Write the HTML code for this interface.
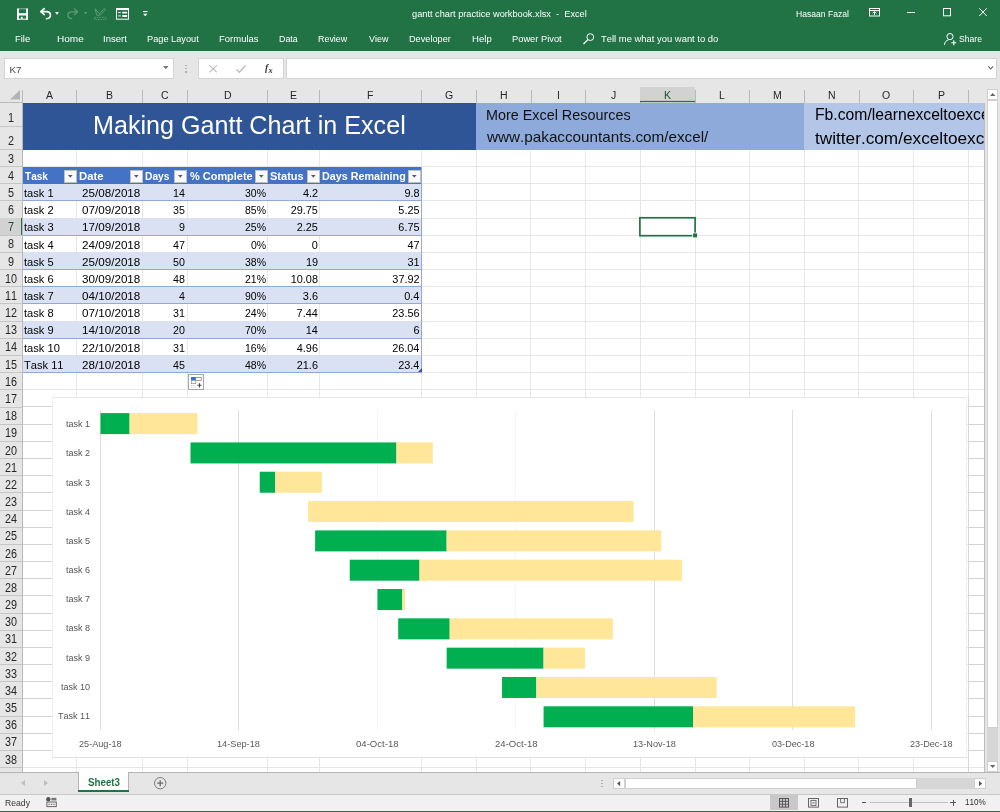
<!DOCTYPE html>
<html lang="en"><head><meta charset="utf-8"><title>gantt chart practice workbook.xlsx - Excel</title>
<style>
*{box-sizing:border-box;margin:0;padding:0}
html,body{width:1000px;height:812px;overflow:hidden;background:#fff}
body{font-family:"Liberation Sans",sans-serif;position:relative;color:#000;font-kerning:none}
.a{position:absolute}
.t{position:absolute;white-space:nowrap;transform-origin:0 0}
svg{overflow:visible}
#w{position:absolute;left:0;top:0;width:1000px;height:812px;will-change:transform}
</style></head><body><div id="w">

<div class="a" style="left:0.00px;top:0.00px;width:1000.00px;height:51.00px;background:#217346;"></div>
<svg class="a" style="left:17px;top:8px;" width="11" height="12" viewBox="0 0 11 12"><rect x="0" y="0.6" width="1.9" height="11" fill="#fff"/><rect x="9.1" y="0.6" width="1.9" height="11" fill="#fff"/><rect x="0" y="0.4" width="11" height="0.9" fill="#fff" opacity="0.55"/><rect x="0" y="5.2" width="11" height="2.3" fill="#fff"/><rect x="0" y="10.6" width="11" height="1.1" fill="#fff"/><rect x="3.9" y="8.8" width="1.7" height="2" fill="#fff"/></svg>
<svg class="a" style="left:40px;top:8px;" width="11" height="12" viewBox="0 0 11 12"><path d="M0.9 3.6h5.6c2.4 0 3.9 1.5 3.9 3.4c0 2-1.5 3.6-4 3.7" fill="none" stroke="#fff" stroke-width="1.55" stroke-linecap="round"/><path d="M4.2 0.6L0.9 3.6L4.2 6.6" fill="none" stroke="#fff" stroke-width="1.55" stroke-linecap="round" stroke-linejoin="round"/></svg>
<svg class="a" style="left:55.4px;top:12.2px;" width="4" height="2.8" viewBox="0 0 4 2.8"><path d="M0 0h4l-2 2.8z" fill="#fff"/></svg>
<svg class="a" style="left:67px;top:8px;" width="11.5" height="12" viewBox="0 0 11.5 12"><path d="M10.4 3.8h-5.8c-2.3 0-3.7 1.5-3.7 3.3c0 2 1.5 3.4 3.9 3.5" fill="none" stroke="#5f9c7b" stroke-width="1.2" stroke-linecap="round"/><path d="M7.4 0.8L10.6 3.8L7.4 6.8" fill="none" stroke="#5f9c7b" stroke-width="1.2" stroke-linecap="round" stroke-linejoin="round"/></svg>
<svg class="a" style="left:84px;top:12.4px;" width="3.4" height="2.2" viewBox="0 0 3.4 2.2"><path d="M0 0h3.4l-1.7 2.2z" fill="#5f9c7b"/></svg>
<svg class="a" style="left:94px;top:8px;" width="12.5" height="12" viewBox="0 0 12.5 12"><path d="M1.2 0.8l1.6 6.6l3.6-0.4M1.2 0.8l5.2 6.2M6.6 6.8l5-5.4l-1.2-1l-5 5.2" fill="none" stroke="#5f9c7b" stroke-width="1"/><path d="M0.5 9.4h11.5v2.2h-11.5z" fill="none" stroke="#5f9c7b" stroke-width="0.9" stroke-dasharray="1.6 0.9"/></svg>
<svg class="a" style="left:116px;top:8.3px;" width="13" height="11.7" viewBox="0 0 13 11.7"><rect x="0.5" y="0.5" width="12" height="10.7" fill="none" stroke="#fff" stroke-width="1"/><rect x="0" y="0" width="13" height="2.1" fill="#fff"/><path d="M2.2 4.6h2.6M2.2 7.9h2.6" stroke="#fff" stroke-width="1"/><rect x="6.2" y="3.7" width="5" height="1.9" rx="0.4" fill="#fff"/><rect x="6.2" y="7" width="5" height="1.9" rx="0.4" fill="#fff"/></svg>
<svg class="a" style="left:142.8px;top:11.2px;" width="4.5" height="5.4" viewBox="0 0 4.5 5.4"><path d="M0 0.6h4.5" stroke="#fff" stroke-width="1.1"/><path d="M0 2.8h4.5l-2.25 2.5z" fill="#fff"/></svg>
<div class="t" style="left:412.01px;top:8px;font-size:9.7px;line-height:11px;color:#fff;transform:scaleX(0.9520);white-space:pre;">gantt chart practice workbook.xlsx  -  Excel</div>
<div class="t" style="left:796.49px;top:8px;font-size:9.7px;line-height:11px;color:#fff;transform:scaleX(0.8869);">Hasaan Fazal</div>
<svg class="a" style="left:869px;top:8px;" width="11" height="8.5" viewBox="0 0 11 8.5"><rect x="0.5" y="0.5" width="10" height="7.5" fill="none" stroke="#fff" stroke-width="1"/><path d="M0.5 2.6h10" stroke="#fff" stroke-width="1"/><path d="M5.5 3.6v3.6M3.6 5.3L5.5 3.6L7.4 5.3" fill="none" stroke="#fff" stroke-width="0.9"/></svg>
<div class="a" style="left:907.00px;top:12.20px;width:8.00px;height:1.00px;background:#fff;"></div>
<svg class="a" style="left:943px;top:8.3px;" width="8" height="8.3" viewBox="0 0 8 8.3"><rect x="0.5" y="0.5" width="7" height="7.3" fill="none" stroke="#fff" stroke-width="1"/></svg>
<svg class="a" style="left:979px;top:8.3px;" width="8" height="8.3" viewBox="0 0 8 8.3"><path d="M0.3 0.3L7.7 8M7.7 0.3L0.3 8" stroke="#fff" stroke-width="1"/></svg>
<div class="t" style="left:15.23px;top:33px;font-size:9.9px;line-height:11px;color:#fff;transform:scaleX(0.9524);">File</div>
<div class="t" style="left:56.68px;top:33px;font-size:9.9px;line-height:11px;color:#fff;transform:scaleX(1.0137);">Home</div>
<div class="t" style="left:103.12px;top:33px;font-size:9.9px;line-height:11px;color:#fff;transform:scaleX(0.9675);">Insert</div>
<div class="t" style="left:146.74px;top:33px;font-size:9.9px;line-height:11px;color:#fff;transform:scaleX(0.9322);">Page Layout</div>
<div class="t" style="left:218.62px;top:33px;font-size:9.9px;line-height:11px;color:#fff;transform:scaleX(0.9629);">Formulas</div>
<div class="t" style="left:278.67px;top:33px;font-size:9.9px;line-height:11px;color:#fff;transform:scaleX(0.8955);">Data</div>
<div class="t" style="left:318.27px;top:33px;font-size:9.9px;line-height:11px;color:#fff;transform:scaleX(0.9030);">Review</div>
<div class="t" style="left:368.56px;top:33px;font-size:9.9px;line-height:11px;color:#fff;transform:scaleX(0.9049);">View</div>
<div class="t" style="left:408.85px;top:33px;font-size:9.9px;line-height:11px;color:#fff;transform:scaleX(0.9287);">Developer</div>
<div class="t" style="left:471.61px;top:33px;font-size:9.9px;line-height:11px;color:#fff;transform:scaleX(0.9721);">Help</div>
<div class="t" style="left:511.83px;top:33px;font-size:9.9px;line-height:11px;color:#fff;transform:scaleX(0.9435);">Power Pivot</div>
<div class="t" style="left:600.79px;top:33px;font-size:9.9px;line-height:11px;color:#fff;transform:scaleX(0.9541);">Tell me what you want to do</div>
<div class="t" style="left:959.31px;top:33px;font-size:9.9px;line-height:11px;color:#fff;transform:scaleX(0.8735);">Share</div>
<svg class="a" style="left:583px;top:33px;" width="11.5" height="11.5" viewBox="0 0 11.5 11.5"><circle cx="7.3" cy="4.1" r="3.4" fill="none" stroke="#fff" stroke-width="1"/><path d="M4.9 6.6L0.5 11" stroke="#fff" stroke-width="1.2"/></svg>
<svg class="a" style="left:944px;top:33px;" width="13" height="12" viewBox="0 0 13 12"><circle cx="6" cy="3.6" r="3.1" fill="none" stroke="#fff" stroke-width="1"/><path d="M0.5 11.8c0.3-3 2-4.6 4-4.9" fill="none" stroke="#fff" stroke-width="1"/><path d="M7.3 9.7h5M9.8 7.2v5" stroke="#fff" stroke-width="1.1"/></svg>
<div class="a" style="left:0.00px;top:51.00px;width:1000.00px;height:37.50px;background:#e6e6e6;"></div>
<div class="a" style="left:3.50px;top:58.00px;width:170.00px;height:20.60px;background:#fff;border:1px solid #d4d4d4"></div>
<div class="t" style="left:9.40px;top:64px;font-size:9.8px;line-height:11px;color:#444;">K7</div>
<svg class="a" style="left:163.2px;top:66.2px;" width="5.6" height="3.2" viewBox="0 0 5.6 3.2"><path d="M0 0h5.6l-2.8 3.2z" fill="#777"/></svg>
<div class="a" style="left:185.20px;top:64.60px;width:1.40px;height:1.40px;background:#b0b0b0;"></div>
<div class="a" style="left:185.20px;top:67.90px;width:1.40px;height:1.40px;background:#b0b0b0;"></div>
<div class="a" style="left:185.20px;top:71.20px;width:1.40px;height:1.40px;background:#b0b0b0;"></div>
<div class="a" style="left:198.00px;top:58.00px;width:85.50px;height:20.60px;background:#fff;border:1px solid #d4d4d4"></div>
<svg class="a" style="left:208.5px;top:65px;" width="8.3" height="7.8" viewBox="0 0 8.3 7.8"><path d="M0.4 0.4L7.9 7.4M7.9 0.4L0.4 7.4" stroke="#bdbdbd" stroke-width="1.2"/></svg>
<svg class="a" style="left:236px;top:65px;" width="10" height="8" viewBox="0 0 10 8"><path d="M0.5 4.6L3.4 7.3L9.5 0.5" fill="none" stroke="#bdbdbd" stroke-width="1.4"/></svg>
<div class="t" style="left:264.9px;top:62px;font-size:9.8px;line-height:12px;color:#3a3a3a;font-family:'Liberation Serif',serif;font-style:italic;font-weight:bold">f<span style="font-size:8.4px;position:relative;top:1.6px;margin-left:0.4px">x</span></div>
<div class="a" style="left:286.00px;top:58.00px;width:710.50px;height:20.60px;background:#fff;border:1px solid #d4d4d4"></div>
<svg class="a" style="left:987.8px;top:66.3px;" width="5.4" height="3.6" viewBox="0 0 5.4 3.6"><path d="M0.3 0.4L2.7 3L5.1 0.4" fill="none" stroke="#666" stroke-width="1.1"/></svg>
<div class="a" style="left:0.00px;top:88.50px;width:1000.00px;height:14.00px;background:#e6e6e6;"></div>
<div class="t" style="left:46.29px;top:88px;font-size:11.7px;line-height:13px;color:#262626;transform:scaleX(0.9000);">A</div>
<div class="a" style="left:76.00px;top:90.00px;width:1.00px;height:12.50px;background:#b9b9b9;"></div>
<div class="t" style="left:106.13px;top:88px;font-size:11.7px;line-height:13px;color:#262626;transform:scaleX(0.9000);">B</div>
<div class="a" style="left:142.00px;top:90.00px;width:1.00px;height:12.50px;background:#b9b9b9;"></div>
<div class="t" style="left:161.18px;top:88px;font-size:11.7px;line-height:13px;color:#262626;transform:scaleX(0.9000);">C</div>
<div class="a" style="left:186.50px;top:90.00px;width:1.00px;height:12.50px;background:#b9b9b9;"></div>
<div class="t" style="left:223.57px;top:88px;font-size:11.7px;line-height:13px;color:#262626;transform:scaleX(0.9000);">D</div>
<div class="a" style="left:267.00px;top:90.00px;width:1.00px;height:12.50px;background:#b9b9b9;"></div>
<div class="t" style="left:290.08px;top:88px;font-size:11.7px;line-height:13px;color:#262626;transform:scaleX(0.9000);">E</div>
<div class="a" style="left:319.00px;top:90.00px;width:1.00px;height:12.50px;background:#b9b9b9;"></div>
<div class="t" style="left:367.11px;top:88px;font-size:11.7px;line-height:13px;color:#262626;transform:scaleX(0.9000);">F</div>
<div class="a" style="left:420.50px;top:90.00px;width:1.00px;height:12.50px;background:#b9b9b9;"></div>
<div class="t" style="left:445.08px;top:88px;font-size:11.7px;line-height:13px;color:#262626;transform:scaleX(0.9000);">G</div>
<div class="a" style="left:476.00px;top:90.00px;width:1.00px;height:12.50px;background:#b9b9b9;"></div>
<div class="t" style="left:500.25px;top:88px;font-size:11.7px;line-height:13px;color:#262626;transform:scaleX(0.9000);">H</div>
<div class="a" style="left:530.50px;top:90.00px;width:1.00px;height:12.50px;background:#b9b9b9;"></div>
<div class="t" style="left:557.09px;top:88px;font-size:11.7px;line-height:13px;color:#262626;transform:scaleX(0.9000);">I</div>
<div class="a" style="left:585.00px;top:90.00px;width:1.00px;height:12.50px;background:#b9b9b9;"></div>
<div class="t" style="left:610.73px;top:88px;font-size:11.7px;line-height:13px;color:#262626;transform:scaleX(0.9000);">J</div>
<div class="a" style="left:639.50px;top:90.00px;width:1.00px;height:12.50px;background:#b9b9b9;"></div>
<div class="a" style="left:640.00px;top:87.00px;width:55.00px;height:15.00px;background:#d2d2d2;"></div>
<svg class="a" style="left:0;top:0" width="1000" height="812" viewBox="0 0 1000 812"><rect x="640" y="100.9" width="55" height="1.3" fill="#217346"/></svg>
<div class="t" style="left:663.92px;top:88px;font-size:11.7px;line-height:13px;color:#1e4d34;transform:scaleX(0.9000);">K</div>
<div class="a" style="left:694.50px;top:90.00px;width:1.00px;height:12.50px;background:#b9b9b9;"></div>
<div class="t" style="left:719.36px;top:88px;font-size:11.7px;line-height:13px;color:#262626;transform:scaleX(0.9000);">L</div>
<div class="a" style="left:749.00px;top:90.00px;width:1.00px;height:12.50px;background:#b9b9b9;"></div>
<div class="t" style="left:772.91px;top:88px;font-size:11.7px;line-height:13px;color:#262626;transform:scaleX(0.9000);">M</div>
<div class="a" style="left:804.00px;top:90.00px;width:1.00px;height:12.50px;background:#b9b9b9;"></div>
<div class="t" style="left:828.25px;top:88px;font-size:11.7px;line-height:13px;color:#262626;transform:scaleX(0.9000);">N</div>
<div class="a" style="left:858.50px;top:90.00px;width:1.00px;height:12.50px;background:#b9b9b9;"></div>
<div class="t" style="left:882.46px;top:88px;font-size:11.7px;line-height:13px;color:#262626;transform:scaleX(0.9000);">O</div>
<div class="a" style="left:913.00px;top:90.00px;width:1.00px;height:12.50px;background:#b9b9b9;"></div>
<div class="t" style="left:937.63px;top:88px;font-size:11.7px;line-height:13px;color:#262626;transform:scaleX(0.9000);">P</div>
<div class="a" style="left:968.00px;top:90.00px;width:1.00px;height:12.50px;background:#b9b9b9;"></div>
<div class="a" style="left:22.00px;top:90.00px;width:1.00px;height:12.50px;background:#b9b9b9;"></div>
<svg class="a" style="left:9.8px;top:90.3px;" width="10" height="9.6" viewBox="0 0 10 9.6"><path d="M10 0v9.6h-10z" fill="#b4b4b4"/></svg>
<div class="a" style="left:0.00px;top:102.50px;width:22.50px;height:669.50px;background:#e6e6e6;"></div>
<div class="t" style="left:7.95px;top:111px;font-size:12.0px;line-height:14px;color:#262626;transform:scaleX(0.9000);">1</div>
<div class="a" style="left:0.00px;top:125.70px;width:22.00px;height:1.00px;background:#c6c6c6;"></div>
<div class="t" style="left:8.10px;top:134px;font-size:12.0px;line-height:14px;color:#262626;transform:scaleX(0.9000);">2</div>
<div class="a" style="left:0.00px;top:148.95px;width:22.00px;height:1.00px;background:#c6c6c6;"></div>
<div class="t" style="left:8.13px;top:152px;font-size:12.0px;line-height:14px;color:#262626;transform:scaleX(0.9000);">3</div>
<div class="a" style="left:0.00px;top:166.12px;width:22.00px;height:1.00px;background:#c6c6c6;"></div>
<div class="t" style="left:8.13px;top:169px;font-size:12.0px;line-height:14px;color:#262626;transform:scaleX(0.9000);">4</div>
<div class="a" style="left:0.00px;top:183.29px;width:22.00px;height:1.00px;background:#c6c6c6;"></div>
<div class="t" style="left:8.11px;top:186px;font-size:12.0px;line-height:14px;color:#262626;transform:scaleX(0.9000);">5</div>
<div class="a" style="left:0.00px;top:200.46px;width:22.00px;height:1.00px;background:#c6c6c6;"></div>
<div class="t" style="left:8.06px;top:203px;font-size:12.0px;line-height:14px;color:#262626;transform:scaleX(0.9000);">6</div>
<div class="a" style="left:0.00px;top:217.63px;width:22.00px;height:1.00px;background:#c6c6c6;"></div>
<div class="a" style="left:0.00px;top:218.13px;width:22.50px;height:17.17px;background:#d2d2d2;"></div>
<div class="a" style="left:21.00px;top:218.13px;width:2.00px;height:17.17px;background:#217346;"></div>
<div class="t" style="left:8.09px;top:220px;font-size:12.0px;line-height:14px;color:#1e4d34;transform:scaleX(0.9000);">7</div>
<div class="a" style="left:0.00px;top:234.80px;width:22.00px;height:1.00px;background:#c6c6c6;"></div>
<div class="t" style="left:8.10px;top:237px;font-size:12.0px;line-height:14px;color:#262626;transform:scaleX(0.9000);">8</div>
<div class="a" style="left:0.00px;top:251.97px;width:22.00px;height:1.00px;background:#c6c6c6;"></div>
<div class="t" style="left:8.10px;top:255px;font-size:12.0px;line-height:14px;color:#262626;transform:scaleX(0.9000);">9</div>
<div class="a" style="left:0.00px;top:269.14px;width:22.00px;height:1.00px;background:#c6c6c6;"></div>
<div class="t" style="left:4.89px;top:272px;font-size:12.0px;line-height:14px;color:#262626;transform:scaleX(0.9000);">10</div>
<div class="a" style="left:0.00px;top:286.31px;width:22.00px;height:1.00px;background:#c6c6c6;"></div>
<div class="t" style="left:4.95px;top:289px;font-size:12.0px;line-height:14px;color:#262626;transform:scaleX(0.9000);">11</div>
<div class="a" style="left:0.00px;top:303.48px;width:22.00px;height:1.00px;background:#c6c6c6;"></div>
<div class="t" style="left:4.95px;top:306px;font-size:12.0px;line-height:14px;color:#262626;transform:scaleX(0.9000);">12</div>
<div class="a" style="left:0.00px;top:320.65px;width:22.00px;height:1.00px;background:#c6c6c6;"></div>
<div class="t" style="left:4.92px;top:323px;font-size:12.0px;line-height:14px;color:#262626;transform:scaleX(0.9000);">13</div>
<div class="a" style="left:0.00px;top:337.82px;width:22.00px;height:1.00px;background:#c6c6c6;"></div>
<div class="t" style="left:4.84px;top:340px;font-size:12.0px;line-height:14px;color:#262626;transform:scaleX(0.9000);">14</div>
<div class="a" style="left:0.00px;top:354.99px;width:22.00px;height:1.00px;background:#c6c6c6;"></div>
<div class="t" style="left:4.91px;top:358px;font-size:12.0px;line-height:14px;color:#262626;transform:scaleX(0.9000);">15</div>
<div class="a" style="left:0.00px;top:372.16px;width:22.00px;height:1.00px;background:#c6c6c6;"></div>
<div class="t" style="left:4.92px;top:375px;font-size:12.0px;line-height:14px;color:#262626;transform:scaleX(0.9000);">16</div>
<div class="a" style="left:0.00px;top:389.33px;width:22.00px;height:1.00px;background:#c6c6c6;"></div>
<div class="t" style="left:4.95px;top:392px;font-size:12.0px;line-height:14px;color:#262626;transform:scaleX(0.9000);">17</div>
<div class="a" style="left:0.00px;top:406.50px;width:22.00px;height:1.00px;background:#c6c6c6;"></div>
<div class="t" style="left:4.92px;top:409px;font-size:12.0px;line-height:14px;color:#262626;transform:scaleX(0.9000);">18</div>
<div class="a" style="left:0.00px;top:423.67px;width:22.00px;height:1.00px;background:#c6c6c6;"></div>
<div class="t" style="left:4.94px;top:426px;font-size:12.0px;line-height:14px;color:#262626;transform:scaleX(0.9000);">19</div>
<div class="a" style="left:0.00px;top:440.84px;width:22.00px;height:1.00px;background:#c6c6c6;"></div>
<div class="t" style="left:5.03px;top:444px;font-size:12.0px;line-height:14px;color:#262626;transform:scaleX(0.9000);">20</div>
<div class="a" style="left:0.00px;top:458.01px;width:22.00px;height:1.00px;background:#c6c6c6;"></div>
<div class="t" style="left:5.09px;top:461px;font-size:12.0px;line-height:14px;color:#262626;transform:scaleX(0.9000);">21</div>
<div class="a" style="left:0.00px;top:475.18px;width:22.00px;height:1.00px;background:#c6c6c6;"></div>
<div class="t" style="left:5.09px;top:478px;font-size:12.0px;line-height:14px;color:#262626;transform:scaleX(0.9000);">22</div>
<div class="a" style="left:0.00px;top:492.35px;width:22.00px;height:1.00px;background:#c6c6c6;"></div>
<div class="t" style="left:5.06px;top:495px;font-size:12.0px;line-height:14px;color:#262626;transform:scaleX(0.9000);">23</div>
<div class="a" style="left:0.00px;top:509.52px;width:22.00px;height:1.00px;background:#c6c6c6;"></div>
<div class="t" style="left:4.98px;top:512px;font-size:12.0px;line-height:14px;color:#262626;transform:scaleX(0.9000);">24</div>
<div class="a" style="left:0.00px;top:526.69px;width:22.00px;height:1.00px;background:#c6c6c6;"></div>
<div class="t" style="left:5.05px;top:529px;font-size:12.0px;line-height:14px;color:#262626;transform:scaleX(0.9000);">25</div>
<div class="a" style="left:0.00px;top:543.86px;width:22.00px;height:1.00px;background:#c6c6c6;"></div>
<div class="t" style="left:5.06px;top:547px;font-size:12.0px;line-height:14px;color:#262626;transform:scaleX(0.9000);">26</div>
<div class="a" style="left:0.00px;top:561.03px;width:22.00px;height:1.00px;background:#c6c6c6;"></div>
<div class="t" style="left:5.09px;top:564px;font-size:12.0px;line-height:14px;color:#262626;transform:scaleX(0.9000);">27</div>
<div class="a" style="left:0.00px;top:578.20px;width:22.00px;height:1.00px;background:#c6c6c6;"></div>
<div class="t" style="left:5.06px;top:581px;font-size:12.0px;line-height:14px;color:#262626;transform:scaleX(0.9000);">28</div>
<div class="a" style="left:0.00px;top:595.37px;width:22.00px;height:1.00px;background:#c6c6c6;"></div>
<div class="t" style="left:5.08px;top:598px;font-size:12.0px;line-height:14px;color:#262626;transform:scaleX(0.9000);">29</div>
<div class="a" style="left:0.00px;top:612.54px;width:22.00px;height:1.00px;background:#c6c6c6;"></div>
<div class="t" style="left:5.10px;top:615px;font-size:12.0px;line-height:14px;color:#262626;transform:scaleX(0.9000);">30</div>
<div class="a" style="left:0.00px;top:629.71px;width:22.00px;height:1.00px;background:#c6c6c6;"></div>
<div class="t" style="left:5.15px;top:632px;font-size:12.0px;line-height:14px;color:#262626;transform:scaleX(0.9000);">31</div>
<div class="a" style="left:0.00px;top:646.88px;width:22.00px;height:1.00px;background:#c6c6c6;"></div>
<div class="t" style="left:5.16px;top:650px;font-size:12.0px;line-height:14px;color:#262626;transform:scaleX(0.9000);">32</div>
<div class="a" style="left:0.00px;top:664.05px;width:22.00px;height:1.00px;background:#c6c6c6;"></div>
<div class="t" style="left:5.13px;top:667px;font-size:12.0px;line-height:14px;color:#262626;transform:scaleX(0.9000);">33</div>
<div class="a" style="left:0.00px;top:681.22px;width:22.00px;height:1.00px;background:#c6c6c6;"></div>
<div class="t" style="left:5.05px;top:684px;font-size:12.0px;line-height:14px;color:#262626;transform:scaleX(0.9000);">34</div>
<div class="a" style="left:0.00px;top:698.39px;width:22.00px;height:1.00px;background:#c6c6c6;"></div>
<div class="t" style="left:5.11px;top:701px;font-size:12.0px;line-height:14px;color:#262626;transform:scaleX(0.9000);">35</div>
<div class="a" style="left:0.00px;top:715.56px;width:22.00px;height:1.00px;background:#c6c6c6;"></div>
<div class="t" style="left:5.13px;top:718px;font-size:12.0px;line-height:14px;color:#262626;transform:scaleX(0.9000);">36</div>
<div class="a" style="left:0.00px;top:732.73px;width:22.00px;height:1.00px;background:#c6c6c6;"></div>
<div class="t" style="left:5.16px;top:735px;font-size:12.0px;line-height:14px;color:#262626;transform:scaleX(0.9000);">37</div>
<div class="a" style="left:0.00px;top:749.90px;width:22.00px;height:1.00px;background:#c6c6c6;"></div>
<div class="t" style="left:5.12px;top:753px;font-size:12.0px;line-height:14px;color:#262626;transform:scaleX(0.9000);">38</div>
<div class="a" style="left:0.00px;top:767.07px;width:22.00px;height:1.00px;background:#c6c6c6;"></div>
<div class="a" style="left:22.00px;top:102.50px;width:1.00px;height:669.50px;background:#b9b9b9;"></div>
<div class="a" style="left:0.00px;top:102.00px;width:22.50px;height:1.00px;background:#b9b9b9;"></div>
<div class="a" style="left:22.50px;top:102.50px;width:962.00px;height:669.50px;background:#fff;"></div>
<div class="a" style="left:22.50px;top:126.00px;width:962.00px;height:1.00px;background:#e7e7e7;"></div>
<div class="a" style="left:22.50px;top:149.00px;width:962.00px;height:1.00px;background:#e7e7e7;"></div>
<div class="a" style="left:22.50px;top:166.00px;width:962.00px;height:1.00px;background:#e7e7e7;"></div>
<div class="a" style="left:22.50px;top:183.00px;width:962.00px;height:1.00px;background:#e7e7e7;"></div>
<div class="a" style="left:22.50px;top:200.00px;width:962.00px;height:1.00px;background:#e7e7e7;"></div>
<div class="a" style="left:22.50px;top:218.00px;width:962.00px;height:1.00px;background:#e7e7e7;"></div>
<div class="a" style="left:22.50px;top:235.00px;width:962.00px;height:1.00px;background:#e7e7e7;"></div>
<div class="a" style="left:22.50px;top:252.00px;width:962.00px;height:1.00px;background:#e7e7e7;"></div>
<div class="a" style="left:22.50px;top:269.00px;width:962.00px;height:1.00px;background:#e7e7e7;"></div>
<div class="a" style="left:22.50px;top:286.00px;width:962.00px;height:1.00px;background:#e7e7e7;"></div>
<div class="a" style="left:22.50px;top:303.00px;width:962.00px;height:1.00px;background:#e7e7e7;"></div>
<div class="a" style="left:22.50px;top:321.00px;width:962.00px;height:1.00px;background:#e7e7e7;"></div>
<div class="a" style="left:22.50px;top:338.00px;width:962.00px;height:1.00px;background:#e7e7e7;"></div>
<div class="a" style="left:22.50px;top:355.00px;width:962.00px;height:1.00px;background:#e7e7e7;"></div>
<div class="a" style="left:22.50px;top:372.00px;width:962.00px;height:1.00px;background:#e7e7e7;"></div>
<div class="a" style="left:22.50px;top:389.00px;width:962.00px;height:1.00px;background:#e7e7e7;"></div>
<div class="a" style="left:22.50px;top:406.00px;width:962.00px;height:1.00px;background:#e7e7e7;"></div>
<div class="a" style="left:22.50px;top:424.00px;width:962.00px;height:1.00px;background:#e7e7e7;"></div>
<div class="a" style="left:22.50px;top:441.00px;width:962.00px;height:1.00px;background:#e7e7e7;"></div>
<div class="a" style="left:22.50px;top:458.00px;width:962.00px;height:1.00px;background:#e7e7e7;"></div>
<div class="a" style="left:22.50px;top:475.00px;width:962.00px;height:1.00px;background:#e7e7e7;"></div>
<div class="a" style="left:22.50px;top:492.00px;width:962.00px;height:1.00px;background:#e7e7e7;"></div>
<div class="a" style="left:22.50px;top:510.00px;width:962.00px;height:1.00px;background:#e7e7e7;"></div>
<div class="a" style="left:22.50px;top:527.00px;width:962.00px;height:1.00px;background:#e7e7e7;"></div>
<div class="a" style="left:22.50px;top:544.00px;width:962.00px;height:1.00px;background:#e7e7e7;"></div>
<div class="a" style="left:22.50px;top:561.00px;width:962.00px;height:1.00px;background:#e7e7e7;"></div>
<div class="a" style="left:22.50px;top:578.00px;width:962.00px;height:1.00px;background:#e7e7e7;"></div>
<div class="a" style="left:22.50px;top:595.00px;width:962.00px;height:1.00px;background:#e7e7e7;"></div>
<div class="a" style="left:22.50px;top:613.00px;width:962.00px;height:1.00px;background:#e7e7e7;"></div>
<div class="a" style="left:22.50px;top:630.00px;width:962.00px;height:1.00px;background:#e7e7e7;"></div>
<div class="a" style="left:22.50px;top:647.00px;width:962.00px;height:1.00px;background:#e7e7e7;"></div>
<div class="a" style="left:22.50px;top:664.00px;width:962.00px;height:1.00px;background:#e7e7e7;"></div>
<div class="a" style="left:22.50px;top:681.00px;width:962.00px;height:1.00px;background:#e7e7e7;"></div>
<div class="a" style="left:22.50px;top:698.00px;width:962.00px;height:1.00px;background:#e7e7e7;"></div>
<div class="a" style="left:22.50px;top:716.00px;width:962.00px;height:1.00px;background:#e7e7e7;"></div>
<div class="a" style="left:22.50px;top:733.00px;width:962.00px;height:1.00px;background:#e7e7e7;"></div>
<div class="a" style="left:22.50px;top:750.00px;width:962.00px;height:1.00px;background:#e7e7e7;"></div>
<div class="a" style="left:22.50px;top:767.00px;width:962.00px;height:1.00px;background:#e7e7e7;"></div>
<div class="a" style="left:76.00px;top:102.50px;width:1.00px;height:669.50px;background:#e7e7e7;"></div>
<div class="a" style="left:142.00px;top:102.50px;width:1.00px;height:669.50px;background:#e7e7e7;"></div>
<div class="a" style="left:187.00px;top:102.50px;width:1.00px;height:669.50px;background:#e7e7e7;"></div>
<div class="a" style="left:267.00px;top:102.50px;width:1.00px;height:669.50px;background:#e7e7e7;"></div>
<div class="a" style="left:319.00px;top:102.50px;width:1.00px;height:669.50px;background:#e7e7e7;"></div>
<div class="a" style="left:421.00px;top:102.50px;width:1.00px;height:669.50px;background:#e7e7e7;"></div>
<div class="a" style="left:476.00px;top:102.50px;width:1.00px;height:669.50px;background:#e7e7e7;"></div>
<div class="a" style="left:530.00px;top:102.50px;width:1.00px;height:669.50px;background:#e7e7e7;"></div>
<div class="a" style="left:585.00px;top:102.50px;width:1.00px;height:669.50px;background:#e7e7e7;"></div>
<div class="a" style="left:640.00px;top:102.50px;width:1.00px;height:669.50px;background:#e7e7e7;"></div>
<div class="a" style="left:695.00px;top:102.50px;width:1.00px;height:669.50px;background:#e7e7e7;"></div>
<div class="a" style="left:749.00px;top:102.50px;width:1.00px;height:669.50px;background:#e7e7e7;"></div>
<div class="a" style="left:804.00px;top:102.50px;width:1.00px;height:669.50px;background:#e7e7e7;"></div>
<div class="a" style="left:858.00px;top:102.50px;width:1.00px;height:669.50px;background:#e7e7e7;"></div>
<div class="a" style="left:913.00px;top:102.50px;width:1.00px;height:669.50px;background:#e7e7e7;"></div>
<div class="a" style="left:968.00px;top:102.50px;width:1.00px;height:669.50px;background:#e7e7e7;"></div>
<div class="a" style="left:22.50px;top:102.50px;width:453.50px;height:47.10px;background:#2f5597;"></div>
<div class="t" style="left:93.24px;top:111px;font-size:25.4px;line-height:28px;color:#fff;transform:scaleX(0.9893);">Making Gantt Chart in Excel</div>
<div class="a" style="left:476.00px;top:102.50px;width:328.30px;height:47.10px;background:#8eaadb;"></div>
<div class="a" style="left:804.30px;top:102.50px;width:180.20px;height:47.10px;background:#b4c6e7;"></div>
<div class="t" style="left:486.02px;top:107px;font-size:14.2px;line-height:16px;color:#111;transform:scaleX(1.0130);">More Excel Resources</div>
<div class="t" style="left:487.22px;top:129px;font-size:14.2px;line-height:16px;color:#111;transform:scaleX(1.0752);">www.pakaccountants.com/excel/</div>
<div class="a" style="left:804.3px;top:102.5px;width:180.2px;height:47.1px;overflow:hidden">
<div class="t" style="left:10.61px;top:2.5px;font-size:16.7px;line-height:19px;transform:scaleX(0.9415);color:#000">Fb.com/learnexceltoexcel</div>
<div class="t" style="left:10.44px;top:26.5px;font-size:16.7px;line-height:19px;transform:scaleX(1.0315);color:#000">twitter.com/exceltoexcel</div>
</div>
<div class="a" style="left:22.50px;top:166.62px;width:399.30px;height:17.17px;background:#4472c4;"></div>
<div class="t" style="left:24.69px;top:171px;font-size:10.4px;line-height:11px;color:#fff;transform:scaleX(0.9704);font-weight:bold;">Task</div>
<div class="a" style="left:63.50px;top:169.52px;width:13.00px;height:13.00px;background:#fafafa;border:1px solid #c0c0c0"></div>
<svg class="a" style="left:67.7px;top:174.92000000000002px;" width="4.6" height="2.8" viewBox="0 0 4.6 2.8"><path d="M0 0h4.6l-2.3 2.8z" fill="#595959"/></svg>
<div class="t" style="left:79.14px;top:171px;font-size:10.4px;line-height:11px;color:#fff;transform:scaleX(1.0888);font-weight:bold;">Date</div>
<div class="a" style="left:129.50px;top:169.52px;width:13.00px;height:13.00px;background:#fafafa;border:1px solid #c0c0c0"></div>
<svg class="a" style="left:133.7px;top:174.92000000000002px;" width="4.6" height="2.8" viewBox="0 0 4.6 2.8"><path d="M0 0h4.6l-2.3 2.8z" fill="#595959"/></svg>
<div class="t" style="left:144.86px;top:171px;font-size:10.4px;line-height:11px;color:#fff;transform:scaleX(0.9857);font-weight:bold;">Days</div>
<div class="a" style="left:174.00px;top:169.52px;width:13.00px;height:13.00px;background:#fafafa;border:1px solid #c0c0c0"></div>
<svg class="a" style="left:178.2px;top:174.92000000000002px;" width="4.6" height="2.8" viewBox="0 0 4.6 2.8"><path d="M0 0h4.6l-2.3 2.8z" fill="#595959"/></svg>
<div class="t" style="left:189.53px;top:171px;font-size:10.4px;line-height:11px;color:#fff;transform:scaleX(1.0542);font-weight:bold;">% Complete</div>
<div class="a" style="left:254.50px;top:169.52px;width:13.00px;height:13.00px;background:#fafafa;border:1px solid #c0c0c0"></div>
<svg class="a" style="left:258.7px;top:174.92000000000002px;" width="4.6" height="2.8" viewBox="0 0 4.6 2.8"><path d="M0 0h4.6l-2.3 2.8z" fill="#595959"/></svg>
<div class="t" style="left:269.73px;top:171px;font-size:10.4px;line-height:11px;color:#fff;transform:scaleX(1.0593);font-weight:bold;">Status</div>
<div class="a" style="left:306.50px;top:169.52px;width:13.00px;height:13.00px;background:#fafafa;border:1px solid #c0c0c0"></div>
<svg class="a" style="left:310.7px;top:174.92000000000002px;" width="4.6" height="2.8" viewBox="0 0 4.6 2.8"><path d="M0 0h4.6l-2.3 2.8z" fill="#595959"/></svg>
<div class="t" style="left:322.33px;top:171px;font-size:10.4px;line-height:11px;color:#fff;transform:scaleX(1.0355);font-weight:bold;">Days Remaining</div>
<div class="a" style="left:408.00px;top:169.52px;width:13.00px;height:13.00px;background:#fafafa;border:1px solid #c0c0c0"></div>
<svg class="a" style="left:412.2px;top:174.92000000000002px;" width="4.6" height="2.8" viewBox="0 0 4.6 2.8"><path d="M0 0h4.6l-2.3 2.8z" fill="#595959"/></svg>
<div class="a" style="left:22.50px;top:183.79px;width:399.30px;height:17.17px;background:#d9e1f2;"></div>
<div class="a" style="left:22.50px;top:200.36px;width:399.30px;height:1.10px;background:#8eaadb;"></div>
<div class="t" style="left:24.43px;top:187px;font-size:10.9px;line-height:12px;color:#000;transform:scaleX(1.0200);">task 1</div>
<div class="t" style="left:82.03px;top:187px;font-size:10.9px;line-height:12px;color:#000;transform:scaleX(1.0700);">25/08/2018</div>
<div class="t" style="left:173.03px;top:187px;font-size:10.9px;line-height:12px;color:#000;transform:scaleX(0.9800);">14</div>
<div class="t" style="left:244.92px;top:187px;font-size:10.9px;line-height:12px;color:#000;transform:scaleX(0.9650);">30%</div>
<div class="t" style="left:302.90px;top:187px;font-size:10.9px;line-height:12px;color:#000;">4.2</div>
<div class="t" style="left:404.42px;top:187px;font-size:10.9px;line-height:12px;color:#000;">9.8</div>
<div class="a" style="left:22.50px;top:217.53px;width:399.30px;height:1.10px;background:#8eaadb;"></div>
<div class="t" style="left:24.43px;top:204px;font-size:10.9px;line-height:12px;color:#000;transform:scaleX(1.0200);">task 2</div>
<div class="t" style="left:82.03px;top:204px;font-size:10.9px;line-height:12px;color:#000;transform:scaleX(1.0700);">07/09/2018</div>
<div class="t" style="left:173.17px;top:204px;font-size:10.9px;line-height:12px;color:#000;transform:scaleX(0.9800);">35</div>
<div class="t" style="left:244.92px;top:204px;font-size:10.9px;line-height:12px;color:#000;transform:scaleX(0.9650);">85%</div>
<div class="t" style="left:290.68px;top:204px;font-size:10.9px;line-height:12px;color:#000;">29.75</div>
<div class="t" style="left:398.34px;top:204px;font-size:10.9px;line-height:12px;color:#000;">5.25</div>
<div class="a" style="left:22.50px;top:218.13px;width:399.30px;height:17.17px;background:#d9e1f2;"></div>
<div class="a" style="left:22.50px;top:234.70px;width:399.30px;height:1.10px;background:#8eaadb;"></div>
<div class="t" style="left:24.43px;top:221px;font-size:10.9px;line-height:12px;color:#000;transform:scaleX(1.0200);">task 3</div>
<div class="t" style="left:82.03px;top:221px;font-size:10.9px;line-height:12px;color:#000;transform:scaleX(1.0700);">17/09/2018</div>
<div class="t" style="left:179.17px;top:221px;font-size:10.9px;line-height:12px;color:#000;transform:scaleX(0.9800);">9</div>
<div class="t" style="left:244.92px;top:221px;font-size:10.9px;line-height:12px;color:#000;transform:scaleX(0.9650);">25%</div>
<div class="t" style="left:296.74px;top:221px;font-size:10.9px;line-height:12px;color:#000;">2.25</div>
<div class="t" style="left:398.34px;top:221px;font-size:10.9px;line-height:12px;color:#000;">6.75</div>
<div class="a" style="left:22.50px;top:251.87px;width:399.30px;height:1.10px;background:#8eaadb;"></div>
<div class="t" style="left:24.43px;top:239px;font-size:10.9px;line-height:12px;color:#000;transform:scaleX(1.0200);">task 4</div>
<div class="t" style="left:82.03px;top:239px;font-size:10.9px;line-height:12px;color:#000;transform:scaleX(1.0700);">24/09/2018</div>
<div class="t" style="left:173.26px;top:239px;font-size:10.9px;line-height:12px;color:#000;transform:scaleX(0.9800);">47</div>
<div class="t" style="left:250.77px;top:239px;font-size:10.9px;line-height:12px;color:#000;transform:scaleX(0.9650);">0%</div>
<div class="t" style="left:311.86px;top:239px;font-size:10.9px;line-height:12px;color:#000;">0</div>
<div class="t" style="left:407.52px;top:239px;font-size:10.9px;line-height:12px;color:#000;">47</div>
<div class="a" style="left:22.50px;top:252.47px;width:399.30px;height:17.17px;background:#d9e1f2;"></div>
<div class="a" style="left:22.50px;top:269.04px;width:399.30px;height:1.10px;background:#8eaadb;"></div>
<div class="t" style="left:24.43px;top:256px;font-size:10.9px;line-height:12px;color:#000;transform:scaleX(1.0200);">task 5</div>
<div class="t" style="left:82.03px;top:256px;font-size:10.9px;line-height:12px;color:#000;transform:scaleX(1.0700);">25/09/2018</div>
<div class="t" style="left:173.14px;top:256px;font-size:10.9px;line-height:12px;color:#000;transform:scaleX(0.9800);">50</div>
<div class="t" style="left:244.92px;top:256px;font-size:10.9px;line-height:12px;color:#000;transform:scaleX(0.9650);">38%</div>
<div class="t" style="left:305.89px;top:256px;font-size:10.9px;line-height:12px;color:#000;">19</div>
<div class="t" style="left:407.51px;top:256px;font-size:10.9px;line-height:12px;color:#000;">31</div>
<div class="a" style="left:22.50px;top:286.21px;width:399.30px;height:1.10px;background:#8eaadb;"></div>
<div class="t" style="left:24.43px;top:273px;font-size:10.9px;line-height:12px;color:#000;transform:scaleX(1.0200);">task 6</div>
<div class="t" style="left:82.03px;top:273px;font-size:10.9px;line-height:12px;color:#000;transform:scaleX(1.0700);">30/09/2018</div>
<div class="t" style="left:173.18px;top:273px;font-size:10.9px;line-height:12px;color:#000;transform:scaleX(0.9800);">48</div>
<div class="t" style="left:244.92px;top:273px;font-size:10.9px;line-height:12px;color:#000;transform:scaleX(0.9650);">21%</div>
<div class="t" style="left:290.70px;top:273px;font-size:10.9px;line-height:12px;color:#000;">10.08</div>
<div class="t" style="left:392.37px;top:273px;font-size:10.9px;line-height:12px;color:#000;">37.92</div>
<div class="a" style="left:22.50px;top:286.81px;width:399.30px;height:17.17px;background:#d9e1f2;"></div>
<div class="a" style="left:22.50px;top:303.38px;width:399.30px;height:1.10px;background:#8eaadb;"></div>
<div class="t" style="left:24.43px;top:290px;font-size:10.9px;line-height:12px;color:#000;transform:scaleX(1.0200);">task 7</div>
<div class="t" style="left:82.03px;top:290px;font-size:10.9px;line-height:12px;color:#000;transform:scaleX(1.0700);">04/10/2018</div>
<div class="t" style="left:178.97px;top:290px;font-size:10.9px;line-height:12px;color:#000;transform:scaleX(0.9800);">4</div>
<div class="t" style="left:244.92px;top:290px;font-size:10.9px;line-height:12px;color:#000;transform:scaleX(0.9650);">90%</div>
<div class="t" style="left:302.83px;top:290px;font-size:10.9px;line-height:12px;color:#000;">3.6</div>
<div class="t" style="left:404.27px;top:290px;font-size:10.9px;line-height:12px;color:#000;">0.4</div>
<div class="a" style="left:22.50px;top:320.55px;width:399.30px;height:1.10px;background:#8eaadb;"></div>
<div class="t" style="left:24.43px;top:307px;font-size:10.9px;line-height:12px;color:#000;transform:scaleX(1.0200);">task 8</div>
<div class="t" style="left:82.03px;top:307px;font-size:10.9px;line-height:12px;color:#000;transform:scaleX(1.0700);">07/10/2018</div>
<div class="t" style="left:173.24px;top:307px;font-size:10.9px;line-height:12px;color:#000;transform:scaleX(0.9800);">31</div>
<div class="t" style="left:244.92px;top:307px;font-size:10.9px;line-height:12px;color:#000;transform:scaleX(0.9650);">24%</div>
<div class="t" style="left:296.60px;top:307px;font-size:10.9px;line-height:12px;color:#000;">7.44</div>
<div class="t" style="left:392.30px;top:307px;font-size:10.9px;line-height:12px;color:#000;">23.56</div>
<div class="a" style="left:22.50px;top:321.15px;width:399.30px;height:17.17px;background:#d9e1f2;"></div>
<div class="a" style="left:22.50px;top:337.72px;width:399.30px;height:1.10px;background:#8eaadb;"></div>
<div class="t" style="left:24.43px;top:324px;font-size:10.9px;line-height:12px;color:#000;transform:scaleX(1.0200);">task 9</div>
<div class="t" style="left:82.03px;top:324px;font-size:10.9px;line-height:12px;color:#000;transform:scaleX(1.0700);">14/10/2018</div>
<div class="t" style="left:173.14px;top:324px;font-size:10.9px;line-height:12px;color:#000;transform:scaleX(0.9800);">20</div>
<div class="t" style="left:244.92px;top:324px;font-size:10.9px;line-height:12px;color:#000;transform:scaleX(0.9650);">70%</div>
<div class="t" style="left:305.70px;top:324px;font-size:10.9px;line-height:12px;color:#000;">14</div>
<div class="t" style="left:413.52px;top:324px;font-size:10.9px;line-height:12px;color:#000;">6</div>
<div class="a" style="left:22.50px;top:354.89px;width:399.30px;height:1.10px;background:#8eaadb;"></div>
<div class="t" style="left:24.43px;top:342px;font-size:10.9px;line-height:12px;color:#000;transform:scaleX(1.0200);">task 10</div>
<div class="t" style="left:82.03px;top:342px;font-size:10.9px;line-height:12px;color:#000;transform:scaleX(1.0700);">22/10/2018</div>
<div class="t" style="left:173.24px;top:342px;font-size:10.9px;line-height:12px;color:#000;transform:scaleX(0.9800);">31</div>
<div class="t" style="left:244.92px;top:342px;font-size:10.9px;line-height:12px;color:#000;transform:scaleX(0.9650);">16%</div>
<div class="t" style="left:296.76px;top:342px;font-size:10.9px;line-height:12px;color:#000;">4.96</div>
<div class="t" style="left:392.14px;top:342px;font-size:10.9px;line-height:12px;color:#000;">26.04</div>
<div class="a" style="left:22.50px;top:355.49px;width:399.30px;height:17.17px;background:#d9e1f2;"></div>
<div class="a" style="left:22.50px;top:372.06px;width:399.30px;height:1.10px;background:#8eaadb;"></div>
<div class="t" style="left:24.35px;top:359px;font-size:10.9px;line-height:12px;color:#000;transform:scaleX(1.0200);">Task 11</div>
<div class="t" style="left:82.03px;top:359px;font-size:10.9px;line-height:12px;color:#000;transform:scaleX(1.0700);">28/10/2018</div>
<div class="t" style="left:173.17px;top:359px;font-size:10.9px;line-height:12px;color:#000;transform:scaleX(0.9800);">45</div>
<div class="t" style="left:244.92px;top:359px;font-size:10.9px;line-height:12px;color:#000;transform:scaleX(0.9650);">48%</div>
<div class="t" style="left:296.76px;top:359px;font-size:10.9px;line-height:12px;color:#000;">21.6</div>
<div class="t" style="left:398.20px;top:359px;font-size:10.9px;line-height:12px;color:#000;">23.4</div>
<div class="a" style="left:421.00px;top:166.62px;width:1.00px;height:206.04px;background:#8eaadb;"></div>
<svg class="a" style="left:417.5px;top:368.16px;" width="4" height="4" viewBox="0 0 4 4"><path d="M4 0v4h-4z" fill="#2f5597"/></svg>
<div class="a" style="left:188.10px;top:374.20px;width:15.80px;height:15.50px;background:#fff;border:1px solid #a6a6a6"></div>
<svg class="a" style="left:190.7px;top:376.5px;" width="11" height="11" viewBox="0 0 11 11"><rect x="0.4" y="0.4" width="9.8" height="3" fill="#fff" stroke="#8a8a8a" stroke-width="0.8"/><rect x="0" y="0" width="4.8" height="3.4" fill="#2f6fed"/><rect x="0.4" y="3.4" width="4.4" height="3.2" fill="#fff" stroke="#9a9a9a" stroke-width="0.8"/><path d="M0.2 8.4h5M0.2 10.2h5" stroke="#b5b5b5" stroke-width="0.8" stroke-dasharray="1.1 1.1"/><path d="M6.4 8.3h4.2M8.5 6.2v4.2" stroke="#444" stroke-width="1.1"/></svg>
<svg class="a" style="left:0;top:0" width="1000" height="812" viewBox="0 0 1000 812"><rect x="639.9" y="217.78" width="55.2" height="17.92" fill="#fff" stroke="#217346" stroke-width="1.7"/><rect x="692.3" y="232.60" width="5.4" height="5.4" fill="#fff"/><rect x="693.1" y="233.40" width="4" height="4" fill="#217346"/></svg>
<div class="a" style="left:23.00px;top:406.00px;width:29.00px;height:1.00px;background:#d2d2d2;"></div>
<div class="a" style="left:968.00px;top:406.00px;width:16.00px;height:1.00px;background:#d2d2d2;"></div>
<div class="a" style="left:23.00px;top:424.00px;width:29.00px;height:1.00px;background:#d2d2d2;"></div>
<div class="a" style="left:968.00px;top:424.00px;width:16.00px;height:1.00px;background:#d2d2d2;"></div>
<div class="a" style="left:23.00px;top:441.00px;width:29.00px;height:1.00px;background:#d2d2d2;"></div>
<div class="a" style="left:968.00px;top:441.00px;width:16.00px;height:1.00px;background:#d2d2d2;"></div>
<div class="a" style="left:23.00px;top:458.00px;width:29.00px;height:1.00px;background:#d2d2d2;"></div>
<div class="a" style="left:968.00px;top:458.00px;width:16.00px;height:1.00px;background:#d2d2d2;"></div>
<div class="a" style="left:23.00px;top:475.00px;width:29.00px;height:1.00px;background:#d2d2d2;"></div>
<div class="a" style="left:968.00px;top:475.00px;width:16.00px;height:1.00px;background:#d2d2d2;"></div>
<div class="a" style="left:23.00px;top:492.00px;width:29.00px;height:1.00px;background:#d2d2d2;"></div>
<div class="a" style="left:968.00px;top:492.00px;width:16.00px;height:1.00px;background:#d2d2d2;"></div>
<div class="a" style="left:23.00px;top:510.00px;width:29.00px;height:1.00px;background:#d2d2d2;"></div>
<div class="a" style="left:968.00px;top:510.00px;width:16.00px;height:1.00px;background:#d2d2d2;"></div>
<div class="a" style="left:23.00px;top:527.00px;width:29.00px;height:1.00px;background:#d2d2d2;"></div>
<div class="a" style="left:968.00px;top:527.00px;width:16.00px;height:1.00px;background:#d2d2d2;"></div>
<div class="a" style="left:23.00px;top:544.00px;width:29.00px;height:1.00px;background:#d2d2d2;"></div>
<div class="a" style="left:968.00px;top:544.00px;width:16.00px;height:1.00px;background:#d2d2d2;"></div>
<div class="a" style="left:23.00px;top:561.00px;width:29.00px;height:1.00px;background:#d2d2d2;"></div>
<div class="a" style="left:968.00px;top:561.00px;width:16.00px;height:1.00px;background:#d2d2d2;"></div>
<div class="a" style="left:23.00px;top:578.00px;width:29.00px;height:1.00px;background:#d2d2d2;"></div>
<div class="a" style="left:968.00px;top:578.00px;width:16.00px;height:1.00px;background:#d2d2d2;"></div>
<div class="a" style="left:23.00px;top:595.00px;width:29.00px;height:1.00px;background:#d2d2d2;"></div>
<div class="a" style="left:968.00px;top:595.00px;width:16.00px;height:1.00px;background:#d2d2d2;"></div>
<div class="a" style="left:23.00px;top:613.00px;width:29.00px;height:1.00px;background:#d2d2d2;"></div>
<div class="a" style="left:968.00px;top:613.00px;width:16.00px;height:1.00px;background:#d2d2d2;"></div>
<div class="a" style="left:23.00px;top:630.00px;width:29.00px;height:1.00px;background:#d2d2d2;"></div>
<div class="a" style="left:968.00px;top:630.00px;width:16.00px;height:1.00px;background:#d2d2d2;"></div>
<div class="a" style="left:23.00px;top:647.00px;width:29.00px;height:1.00px;background:#d2d2d2;"></div>
<div class="a" style="left:968.00px;top:647.00px;width:16.00px;height:1.00px;background:#d2d2d2;"></div>
<div class="a" style="left:23.00px;top:664.00px;width:29.00px;height:1.00px;background:#d2d2d2;"></div>
<div class="a" style="left:968.00px;top:664.00px;width:16.00px;height:1.00px;background:#d2d2d2;"></div>
<div class="a" style="left:23.00px;top:681.00px;width:29.00px;height:1.00px;background:#d2d2d2;"></div>
<div class="a" style="left:968.00px;top:681.00px;width:16.00px;height:1.00px;background:#d2d2d2;"></div>
<div class="a" style="left:23.00px;top:698.00px;width:29.00px;height:1.00px;background:#d2d2d2;"></div>
<div class="a" style="left:968.00px;top:698.00px;width:16.00px;height:1.00px;background:#d2d2d2;"></div>
<div class="a" style="left:23.00px;top:716.00px;width:29.00px;height:1.00px;background:#d2d2d2;"></div>
<div class="a" style="left:968.00px;top:716.00px;width:16.00px;height:1.00px;background:#d2d2d2;"></div>
<div class="a" style="left:23.00px;top:733.00px;width:29.00px;height:1.00px;background:#d2d2d2;"></div>
<div class="a" style="left:968.00px;top:733.00px;width:16.00px;height:1.00px;background:#d2d2d2;"></div>
<div class="a" style="left:23.00px;top:750.00px;width:29.00px;height:1.00px;background:#d2d2d2;"></div>
<div class="a" style="left:968.00px;top:750.00px;width:16.00px;height:1.00px;background:#d2d2d2;"></div>
<div class="a" style="left:968.00px;top:397.00px;width:1.00px;height:375.00px;background:#d8d8d8;"></div>
<div class="a" style="left:52.30px;top:396.60px;width:915.00px;height:361.40px;background:#fff;border:1px solid #f0f0f0;border-top-color:#e6e6e6;border-bottom-color:#e2e2e2"></div>
<div class="a" style="left:100.00px;top:410.00px;width:1.00px;height:320.00px;background:#dedede;"></div>
<div class="a" style="left:238.46px;top:410.00px;width:1.00px;height:320.00px;background:#dedede;"></div>
<div class="a" style="left:376.92px;top:410.00px;width:1.00px;height:320.00px;background:#f6f6f6;"></div>
<div class="a" style="left:515.38px;top:410.00px;width:1.00px;height:320.00px;background:#f6f6f6;"></div>
<div class="a" style="left:653.84px;top:410.00px;width:1.00px;height:320.00px;background:#dedede;"></div>
<div class="a" style="left:792.30px;top:410.00px;width:1.00px;height:320.00px;background:#dedede;"></div>
<div class="a" style="left:930.76px;top:410.00px;width:1.00px;height:320.00px;background:#dedede;"></div>
<div class="t" style="left:79.14px;top:739px;font-size:8.7px;line-height:10px;color:#595959;transform:scaleX(1.0499);">25-Aug-18</div>
<div class="t" style="left:217.36px;top:739px;font-size:8.7px;line-height:10px;color:#595959;transform:scaleX(1.0559);">14-Sep-18</div>
<div class="t" style="left:356.15px;top:739px;font-size:8.7px;line-height:10px;color:#595959;transform:scaleX(1.1010);">04-Oct-18</div>
<div class="t" style="left:494.50px;top:739px;font-size:8.7px;line-height:10px;color:#595959;transform:scaleX(1.1039);">24-Oct-18</div>
<div class="t" style="left:632.74px;top:739px;font-size:8.7px;line-height:10px;color:#595959;transform:scaleX(1.0561);">13-Nov-18</div>
<div class="t" style="left:771.54px;top:739px;font-size:8.7px;line-height:10px;color:#595959;transform:scaleX(1.0476);">03-Dec-18</div>
<div class="t" style="left:909.90px;top:739px;font-size:8.7px;line-height:10px;color:#595959;transform:scaleX(1.0501);">23-Dec-18</div>
<div class="t" style="left:66.00px;top:419px;font-size:8.7px;line-height:10px;color:#555;transform:scaleX(1.0400);">task 1</div>
<div class="t" style="left:66.02px;top:448px;font-size:8.7px;line-height:10px;color:#555;transform:scaleX(1.0400);">task 2</div>
<div class="t" style="left:65.96px;top:478px;font-size:8.7px;line-height:10px;color:#555;transform:scaleX(1.0400);">task 3</div>
<div class="t" style="left:65.83px;top:507px;font-size:8.7px;line-height:10px;color:#555;transform:scaleX(1.0400);">task 4</div>
<div class="t" style="left:65.94px;top:536px;font-size:8.7px;line-height:10px;color:#555;transform:scaleX(1.0400);">task 5</div>
<div class="t" style="left:65.96px;top:565px;font-size:8.7px;line-height:10px;color:#555;transform:scaleX(1.0400);">task 6</div>
<div class="t" style="left:66.02px;top:594px;font-size:8.7px;line-height:10px;color:#555;transform:scaleX(1.0400);">task 7</div>
<div class="t" style="left:65.95px;top:623px;font-size:8.7px;line-height:10px;color:#555;transform:scaleX(1.0400);">task 8</div>
<div class="t" style="left:65.99px;top:653px;font-size:8.7px;line-height:10px;color:#555;transform:scaleX(1.0400);">task 9</div>
<div class="t" style="left:60.88px;top:682px;font-size:8.7px;line-height:10px;color:#555;transform:scaleX(1.0400);">task 10</div>
<div class="t" style="left:57.96px;top:711px;font-size:8.7px;line-height:10px;color:#555;transform:scaleX(1.0400);">Task 11</div>
<svg class="a" style="left:0;top:0" width="1000" height="812" viewBox="0 0 1000 812"><rect x="100.50" y="413.10" width="29.08" height="21" fill="#00b050"/><rect x="129.58" y="413.10" width="67.85" height="21" fill="#ffe699"/><rect x="190.50" y="442.42" width="205.96" height="21" fill="#00b050"/><rect x="396.46" y="442.42" width="36.35" height="21" fill="#ffe699"/><rect x="259.73" y="471.74" width="15.58" height="21" fill="#00b050"/><rect x="275.31" y="471.74" width="46.73" height="21" fill="#ffe699"/><rect x="308.19" y="501.06" width="325.38" height="21" fill="#ffe699"/><rect x="315.11" y="530.38" width="131.54" height="21" fill="#00b050"/><rect x="446.65" y="530.38" width="214.61" height="21" fill="#ffe699"/><rect x="349.73" y="559.70" width="69.78" height="21" fill="#00b050"/><rect x="419.51" y="559.70" width="262.52" height="21" fill="#ffe699"/><rect x="377.42" y="589.02" width="24.92" height="21" fill="#00b050"/><rect x="402.34" y="589.02" width="2.77" height="21" fill="#ffe699"/><rect x="398.19" y="618.34" width="51.51" height="21" fill="#00b050"/><rect x="449.70" y="618.34" width="163.11" height="21" fill="#ffe699"/><rect x="446.65" y="647.66" width="96.92" height="21" fill="#00b050"/><rect x="543.57" y="647.66" width="41.54" height="21" fill="#ffe699"/><rect x="502.03" y="676.98" width="34.34" height="21" fill="#00b050"/><rect x="536.37" y="676.98" width="180.27" height="21" fill="#ffe699"/><rect x="543.57" y="706.30" width="149.54" height="21" fill="#00b050"/><rect x="693.11" y="706.30" width="162.00" height="21" fill="#ffe699"/></svg>
<div class="a" style="left:983.60px;top:102.50px;width:1.00px;height:669.50px;background:#bdbdbd;"></div>
<div class="a" style="left:984.50px;top:87.00px;width:15.50px;height:685.50px;background:#e6e6e6;"></div>
<div class="a" style="left:986.80px;top:88.50px;width:11.60px;height:11.00px;background:#fff;border:1px solid #cfcfcf"></div>
<svg class="a" style="left:989.9px;top:92.5px;" width="5.4" height="3" viewBox="0 0 5.4 3"><path d="M0 3h5.4l-2.7-3z" fill="#666"/></svg>
<div class="a" style="left:986.80px;top:99.50px;width:11.60px;height:628.20px;background:#fff;border:1px solid #cfcfcf"></div>
<div class="a" style="left:986.80px;top:727.70px;width:11.60px;height:33.30px;background:#d6d6d6;"></div>
<div class="a" style="left:986.80px;top:761.00px;width:11.60px;height:11.00px;background:#fff;border:1px solid #cfcfcf"></div>
<svg class="a" style="left:989.9px;top:765px;" width="5.4" height="3" viewBox="0 0 5.4 3"><path d="M0 0h5.4l-2.7 3z" fill="#666"/></svg>
<div class="a" style="left:0.00px;top:772.00px;width:1000.00px;height:22.50px;background:#e6e6e6;"></div>
<div class="a" style="left:0.00px;top:772.00px;width:1000.00px;height:1.00px;background:#b4b4b4;"></div>
<div class="a" style="left:0.00px;top:793.60px;width:1000.00px;height:1.00px;background:#c8c8c8;"></div>
<div class="a" style="left:78.40px;top:772.00px;width:50.40px;height:20.00px;background:#fff;border-left:1px solid #b4b4b4;border-right:1px solid #b4b4b4"></div>
<div class="a" style="left:78.40px;top:790.00px;width:50.40px;height:2.00px;background:#217346;"></div>
<div class="t" style="left:87.72px;top:776px;font-size:10.5px;line-height:12px;color:#217346;transform:scaleX(0.9304);font-weight:bold;">Sheet3</div>
<svg class="a" style="left:21px;top:779.5px;" width="4" height="6" viewBox="0 0 4 6"><path d="M4 0v6l-4-3z" fill="#c0c0c0"/></svg>
<svg class="a" style="left:44px;top:779.5px;" width="4" height="6" viewBox="0 0 4 6"><path d="M0 0v6l4-3z" fill="#c0c0c0"/></svg>
<svg class="a" style="left:154.4px;top:776.5px;" width="12.4" height="12.4" viewBox="0 0 12.4 12.4"><circle cx="6.2" cy="6.2" r="5.7" fill="none" stroke="#7a7a7a" stroke-width="1"/><path d="M3.2 6.2h6M6.2 3.2v6" stroke="#6a6a6a" stroke-width="1.3"/></svg>
<div class="a" style="left:601.30px;top:779.60px;width:1.40px;height:1.40px;background:#b0b0b0;"></div>
<div class="a" style="left:601.30px;top:782.60px;width:1.40px;height:1.40px;background:#b0b0b0;"></div>
<div class="a" style="left:601.30px;top:785.60px;width:1.40px;height:1.40px;background:#b0b0b0;"></div>
<div class="a" style="left:613.40px;top:778.20px;width:372.40px;height:10.80px;background:#d6d6d6;"></div>
<div class="a" style="left:613.40px;top:778.20px;width:11.40px;height:10.80px;background:#fff;border:1px solid #cfcfcf"></div>
<svg class="a" style="left:617.2px;top:781px;" width="3.2" height="5.2" viewBox="0 0 3.2 5.2"><path d="M3.2 0v5.2l-3.2-2.6z" fill="#555"/></svg>
<div class="a" style="left:625.40px;top:778.20px;width:291.60px;height:10.80px;background:#fff;border:1px solid #cfcfcf"></div>
<div class="a" style="left:974.00px;top:778.20px;width:11.80px;height:10.80px;background:#fff;border:1px solid #cfcfcf"></div>
<svg class="a" style="left:978.6px;top:781px;" width="3.2" height="5.2" viewBox="0 0 3.2 5.2"><path d="M0 0v5.2l3.2-2.6z" fill="#555"/></svg>
<div class="a" style="left:0.00px;top:794.50px;width:1000.00px;height:17.50px;background:#f1f1f1;"></div>
<div class="a" style="left:0.00px;top:810.70px;width:1000.00px;height:1.30px;background:#217346;"></div>
<div class="t" style="left:4.99px;top:798px;font-size:9.2px;line-height:10px;color:#333;transform:scaleX(0.9411);">Ready</div>
<svg class="a" style="left:45.5px;top:797px;" width="10.5" height="10" viewBox="0 0 10.5 10"><circle cx="2.3" cy="2.3" r="2.2" fill="#555"/><rect x="5.4" y="0.8" width="5" height="2.6" fill="#777"/><rect x="0.9" y="5" width="9.4" height="4.6" fill="none" stroke="#666" stroke-width="1"/><path d="M2.4 7.3h6.4" stroke="#666" stroke-width="1" stroke-dasharray="1.4 1"/></svg>
<div class="a" style="left:769.60px;top:794.80px;width:28.80px;height:15.60px;background:#c8c8c8;"></div>
<svg class="a" style="left:778.6px;top:797.5px;" width="10" height="9.6" viewBox="0 0 10 9.6"><rect x="0.5" y="0.5" width="9" height="8.6" fill="none" stroke="#555" stroke-width="1"/><path d="M3.5 0.5v8.6M6.5 0.5v8.6M0.5 3.4h9M0.5 6.3h9" stroke="#555" stroke-width="0.9"/></svg>
<svg class="a" style="left:808px;top:797.5px;" width="11" height="9.6" viewBox="0 0 11 9.6"><rect x="0.5" y="0.5" width="10" height="8.6" fill="none" stroke="#666" stroke-width="1"/><rect x="3" y="2.4" width="5" height="5" fill="none" stroke="#666" stroke-width="0.9"/><path d="M4.2 4.9h2.6" stroke="#666" stroke-width="0.9"/></svg>
<svg class="a" style="left:837.3px;top:797.5px;" width="11" height="9.6" viewBox="0 0 11 9.6"><rect x="0.5" y="0.5" width="10" height="8.6" fill="none" stroke="#666" stroke-width="1"/><path d="M3.6 0.5v4.2h3.8v-4.2" fill="none" stroke="#666" stroke-width="0.9"/></svg>
<div class="a" style="left:862.00px;top:802.10px;width:4.20px;height:1.20px;background:#555;"></div>
<div class="a" style="left:870.40px;top:802.20px;width:78.00px;height:1.00px;background:#c0c0c0;"></div>
<div class="a" style="left:908.80px;top:798.00px;width:3.60px;height:8.60px;background:#666;"></div>
<div class="a" style="left:950.30px;top:802.10px;width:5.80px;height:1.20px;background:#555;"></div>
<div class="a" style="left:952.60px;top:799.80px;width:1.20px;height:5.80px;background:#555;"></div>
<div class="t" style="left:965.08px;top:797px;font-size:8.8px;line-height:10px;color:#333;transform:scaleX(0.9246);">110%</div>
</div></body></html>
